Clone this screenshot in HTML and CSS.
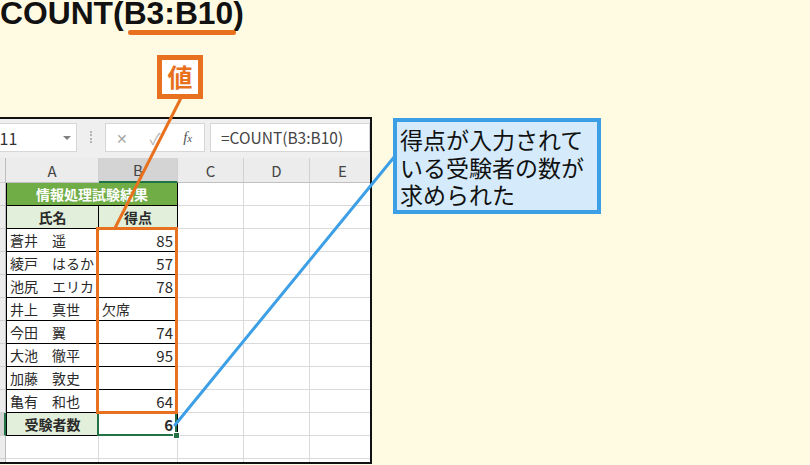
FILE: index.html
```html
<!DOCTYPE html>
<html lang="ja">
<head>
    <meta charset="UTF-8">
    <meta name="viewport" content="width=device-width, initial-scale=1.0">
    <title>COUNT関数</title>
    <link rel="stylesheet" href="styles.css">
</head>
<body>
    <h1 class="formula-title">COUNT(<span class="range">B3:B10</span>)</h1>

    <div class="sheet">
        <div class="toolbar">
            <div class="name-box"><span>B11</span><i class="drop"></i></div>
            <div class="grip"></div>
            <div class="fx-box">
                <span class="cancel">✕</span>
                <span class="enter">✓</span>
                <span class="fx">f<small>x</small></span>
            </div>
            <div class="formula">=COUNT(B3:B10)</div>
        </div>

        <div class="grid">
            <!-- column headers -->
            <div class="rh"></div>
            <div class="ch">A</div>
            <div class="ch on">B</div>
            <div class="ch">C</div>
            <div class="ch">D</div>
            <div class="ch">E</div>

            <div class="rh">1</div>
            <div class="tb a title-cell">情報処理試験結果</div>
            <div></div><div></div><div></div>

            <div class="rh">2</div>
            <div class="tb a sub">氏名</div>
            <div class="tb sub">得点</div>
            <div></div><div></div><div></div>

            <div class="rh">3</div>
            <div class="tb a">蒼井　遥</div>
            <div class="tb num">85</div>
            <div></div><div></div><div></div>

            <div class="rh">4</div>
            <div class="tb a">綾戸　はるか</div>
            <div class="tb num">57</div>
            <div></div><div></div><div></div>

            <div class="rh">5</div>
            <div class="tb a">池尻　エリカ</div>
            <div class="tb num">78</div>
            <div></div><div></div><div></div>

            <div class="rh">6</div>
            <div class="tb a">井上　真世</div>
            <div class="tb">欠席</div>
            <div></div><div></div><div></div>

            <div class="rh">7</div>
            <div class="tb a">今田　翼</div>
            <div class="tb num">74</div>
            <div></div><div></div><div></div>

            <div class="rh">8</div>
            <div class="tb a">大池　徹平</div>
            <div class="tb num">95</div>
            <div></div><div></div><div></div>

            <div class="rh">9</div>
            <div class="tb a">加藤　敦史</div>
            <div class="tb num"></div>
            <div></div><div></div><div></div>

            <div class="rh">10</div>
            <div class="tb a">亀有　和也</div>
            <div class="tb num">64</div>
            <div></div><div></div><div></div>

            <div class="rh on">11</div>
            <div class="tb a sub">受験者数</div>
            <div class="tb num total sel">6</div>
            <div></div><div></div><div></div>

            <div class="rh">12</div>
            <div></div><div></div><div></div><div></div><div></div>

            <div class="rh">13</div>
            <div></div><div></div><div></div><div></div><div></div>

            <!-- range passed to COUNT -->
            <span class="range-mark"></span>
        </div>
    </div>

    <svg class="leaders" width="810" height="465" viewBox="0 0 810 465">
        <line x1="181" y1="98" x2="115" y2="228" stroke="#e8711f" stroke-width="3"/>
        <line x1="395" y1="156" x2="175" y2="425" stroke="#3d9fe6" stroke-width="3" stroke-linecap="round"/>
    </svg>

    <div class="tag">値</div>
    <div class="note">得点が入力されて<br>いる受験者の数が<br>求められた</div>
</body>
</html>
```

FILE: styles.css
```css
body {
    margin: 0;
    width: 810px;
    height: 465px;
    overflow: hidden;
    position: relative;
    background: #fffbe3;
    font-family: "Noto Sans CJK JP", sans-serif;
}

.formula-title {
    margin: -3px 0 0;
    font: bold 31.8px/32px "Liberation Sans", Arial, sans-serif;
    color: #111;
}
.formula-title .range {
    position: relative;
}
.formula-title .range::after {
    content: "";
    position: absolute;
    left: 4px;
    right: -3px;
    bottom: -3.5px;
    height: 5px;
    border-radius: 3px;
    background: #e8711f;
}

/* spreadsheet window */
.sheet {
    margin: 88px 0 0 -39px;
    width: 411px;
    height: 347px;
    box-sizing: border-box;
    border: 2px solid #111;
    background: #fff;
    overflow: hidden;
    position: relative;
}

.toolbar {
    height: 39px;
    box-sizing: border-box;
    background: #efefef;
    display: flex;
    align-items: flex-start;
    padding: 4px 0 0 21px;
}
.name-box {
    width: 93px;
    height: 29px;
    box-sizing: border-box;
    background: #fff;
    border: 1px solid #d6d6d6;
    display: flex;
    align-items: center;
    justify-content: space-between;
    padding: 0 5px 0 4px;
    font-size: 16px;
    color: #333;
}
.name-box .drop {
    width: 0;
    height: 0;
    border-left: 4px solid transparent;
    border-right: 4px solid transparent;
    border-top: 4px solid #808080;
}
.grip {
    width: 0;
    height: 12px;
    margin: 8px 0 0 13px;
    border-left: 2px dotted #b5b5b5;
}
.fx-box {
    margin-left: 13px;
    width: 100px;
    height: 29px;
    box-sizing: border-box;
    background: #fff;
    border: 1px solid #d6d6d6;
    display: flex;
    align-items: center;
}
.fx-box span {
    flex: 1;
    text-align: center;
}
.cancel {
    font-size: 14px;
    color: #a8a8a8;
}
.enter {
    font-size: 16px;
    color: #b8b8b8;
}
.fx {
    font: italic 15px "Liberation Serif", serif;
    color: #555;
}
.fx small {
    font-size: 11px;
}
.formula {
    margin-left: 5px;
    flex: 1;
    height: 29px;
    box-sizing: border-box;
    background: #fff;
    border: 1px solid #d6d6d6;
    padding-left: 10px;
    font-size: 15.5px;
    line-height: 27px;
    color: #444;
}

/* cells */
.grid {
    display: grid;
    grid-template-columns: 43px 93px 79px 66px 66px 66px;
    grid-template-rows: 25px repeat(13, 23px);
    position: relative;
    font-size: 14px;
    color: #2a2a2a;
}
.grid > div {
    box-sizing: border-box;
    border-right: 1px solid #dadada;
    border-bottom: 1px solid #dadada;
    display: flex;
    align-items: center;
    padding: 0 3px;
    white-space: nowrap;
    overflow: hidden;
}
.grid > .ch {
    justify-content: center;
    background: #ececec;
    border-right-color: #d0d0d0;
    border-bottom-color: #bfbfbf;
    color: #444;
    font-size: 15px;
}
.grid > .ch.on {
    background: #d4d4d4;
    border-bottom: 2px solid #217346;
}
.grid > .rh {
    justify-content: center;
    background: #ececec;
    border-right-color: #bdbdbd;
    border-bottom-color: #d0d0d0;
    color: #444;
}
.grid > .rh.on {
    background: #d4d4d4;
    border-right: 2px solid #217346;
}
.grid > .tb {
    border-color: #000;
}
.grid > .tb.a {
    border-left: 1px solid #000;
}
.grid > .title-cell {
    grid-column: span 2;
    justify-content: center;
    background: #70ad47;
    color: #fff;
    font-weight: bold;
}
.grid > .sub {
    justify-content: center;
    background: #e2efda;
    font-weight: bold;
}
.grid > .num {
    justify-content: flex-end;
    padding-right: 4px;
    font-size: 15px;
}
.grid > .total {
    font-weight: bold;
}
.grid > .sel {
    position: relative;
    overflow: visible;
}
.sel::before {
    content: "";
    position: absolute;
    left: -2px;
    top: -2px;
    right: 0;
    bottom: -1px;
    border: 2px solid #217346;
}
.sel::after {
    content: "";
    position: absolute;
    right: -3px;
    bottom: -4px;
    width: 5px;
    height: 5px;
    background: #217346;
    border: 1px solid #fff;
}
.range-mark {
    position: absolute;
    left: 133px;
    top: 69px;
    width: 82px;
    height: 187px;
    box-sizing: border-box;
    border: 3px solid #e8711f;
}

/* callouts */
.leaders {
    position: absolute;
    left: 0;
    top: 0;
}
.tag {
    position: absolute;
    left: 157px;
    top: 55px;
    width: 46px;
    height: 44px;
    box-sizing: border-box;
    border: 5px solid #e8711f;
    background: #fff;
    color: #e8711f;
    font-size: 25px;
    font-weight: bold;
    line-height: 33px;
    text-align: center;
}
.note {
    position: absolute;
    left: 393px;
    top: 118px;
    width: 208px;
    height: 96px;
    box-sizing: border-box;
    border: 4px solid #3c9ee4;
    background: #d5ebfb;
    padding: 4px 0 0 3px;
    font-size: 23px;
    line-height: 27.5px;
    color: #111;
}
```
